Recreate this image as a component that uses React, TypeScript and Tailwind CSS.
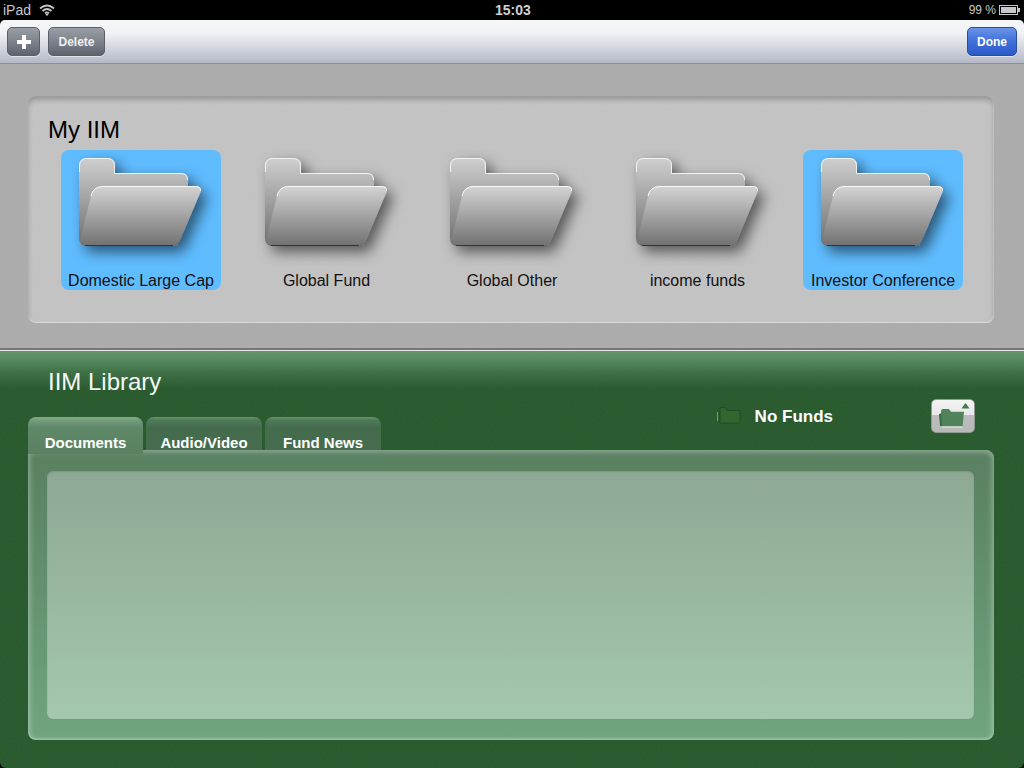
const tiles = [
  { name: "Domestic Large Cap", on: true },
  { name: "Global Fund", on: false },
  { name: "Global Other", on: false },
  { name: "income funds", on: false },
  { name: "Investor Conference", on: true },
];

function Grain({ id, opacity }: { id: string; opacity: string }) {
  return (
    <svg className={`absolute inset-0 w-full h-full pointer-events-none ${opacity}`} aria-hidden="true">
      <filter id={id}>
        <feTurbulence type="fractalNoise" baseFrequency="0.8" numOctaves="2" seed="4" />
        <feColorMatrix type="saturate" values="0" />
      </filter>
      <rect width="100%" height="100%" filter={`url(#${id})`} />
    </svg>
  );
}

function Folder({ id }: { id: string }) {
  return (
    <svg width="160" height="116" viewBox="0 0 160 116" className="block">
      <defs>
        <linearGradient id={`${id}b`} x1="0" y1="0" x2="0" y2="1">
          <stop offset="0" stopColor="#cfcfcf" />
          <stop offset="1" stopColor="#6e6e6e" />
        </linearGradient>
        <linearGradient id={`${id}f`} x1="0" y1="0" x2="0" y2="1">
          <stop offset="0" stopColor="#d4d4d4" />
          <stop offset="1" stopColor="#717171" />
        </linearGradient>
        <filter id={`${id}s`} x="-20%" y="-20%" width="150%" height="150%">
          <feDropShadow dx="6" dy="6" stdDeviation="7" floodColor="#000" floodOpacity="0.55" />
        </filter>
      </defs>
      <g filter={`url(#${id}s)`}>
        <path
          d="M18 16 Q18 8 26 8 H46 Q54 8 54 16 V23 H120 Q127 23 127 30 V60 L116 96 H26 Q18 96 18 88 Z"
          fill={`url(#${id}b)`}
        />
        <path
          d="M42 36 H134 Q141 36 139.500 42 L120 88 Q117 96 110 96 H26 Q18 96 19.500 88 L30 46 Q32 36 42 36 Z"
          fill={`url(#${id}f)`}
        />
      </g>
      <path d="M18.500 22 V16 Q18.500 8.500 26 8.500 H46 Q53.500 8.500 53.500 16 V23.500 H120 Q126.500 23.500 126.500 30" fill="none" stroke="#f4f4f4" strokeWidth="1" />
      <path d="M30 46 Q32 36.500 42 36.500 H134 Q140.500 36.500 139.500 41" fill="none" stroke="#fafafa" strokeWidth="1" />
      <path d="M24 95.500 H112" fill="none" stroke="#333" strokeWidth="1" />
    </svg>
  );
}

function Wifi() {
  return (
    <svg width="16" height="12" viewBox="0 0 16 12" fill="none" stroke="#c4c4c4" strokeWidth="1.800">
      <path d="M1 4.500 Q8 -1.500 15 4.500" />
      <path d="M3.500 7 Q8 3 12.500 7" />
      <path d="M6 9.300 Q8 7.700 10 9.300" />
      <path d="M7 10.500 L8 11.500 L9 10.500 Z" fill="#c4c4c4" strokeWidth="1" />
    </svg>
  );
}

export default function App() {
  return (
    <div className="w-[1024px] h-[768px] flex flex-col overflow-hidden bg-black font-['Liberation_Sans',Arial,sans-serif]">
      <div className="h-5 shrink-0 relative flex items-center justify-between pl-[3px] pr-[4px] text-[#c8c8c8] text-[14px]">
        <div className="flex items-center gap-[8px]">
          <span>iPad</span>
          <Wifi />
        </div>
        <span className="absolute left-[495px] top-0 font-bold text-[14px] text-[#d0d0d0]">15:03</span>
        <div className="flex items-center gap-[3px]">
          <span className="text-[12px]">99 %</span>
          <div className="flex items-center">
            <div className="w-[19px] h-[10px] border border-[#c8c8c8] p-[1px]">
              <div className="w-full h-full bg-[#c8c8c8]" />
            </div>
            <div className="w-[2px] h-[4px] bg-[#c8c8c8]" />
          </div>
        </div>
      </div>

      <div className="h-11 shrink-0 rounded-t-[5px] flex items-center justify-between pl-[7px] pr-[7px] border-b border-[#8b8e9c] bg-[linear-gradient(#f6f7f9_0%,#f1f2f5_30%,#cfd2dc_70%,#b4b8c7_100%)]">
        <div className="flex items-center gap-2">
          <button className="w-[33px] h-[29px] rounded-[5px] border border-[#5a5f69] flex items-center justify-center bg-[linear-gradient(#9a9ea6_0%,#7d828c_50%,#5e636e_100%)] shadow-[0_1px_0_#ffffff80]">
            <span className="relative block w-[14px] h-[14px]">
              <span className="absolute left-[5px] top-0 w-1 h-[14px] bg-white" />
              <span className="absolute left-0 top-[5px] w-[14px] h-1 bg-white" />
            </span>
          </button>
          <button className="w-[57px] h-[29px] rounded-[5px] border border-[#5a5f69] text-[12px] font-bold text-[#f0f0f0] bg-[linear-gradient(#9a9ea6_0%,#7d828c_50%,#5e636e_100%)] shadow-[0_1px_0_#ffffff80]">
            Delete
          </button>
        </div>
        <button className="w-[50px] h-[29px] rounded-[5px] border border-[#2a4f96] text-[12px] font-bold text-white bg-[linear-gradient(#6a94e8_0%,#3f6fdb_50%,#2c5bc9_100%)] shadow-[0_1px_0_#ffffff80]">
          Done
        </button>
      </div>

      <div className="relative h-[284px] shrink-0 pt-8 px-7 bg-[#acacac]">
        <Grain id="g1" opacity="opacity-[0.07]" />
        <div className="relative w-[966px] h-[227px] rounded-[8px] bg-[#c3c3c3] pl-[33px] pr-[31px] pt-[19px] shadow-[inset_0_4px_5px_#00000038,inset_0_-1px_1px_#ffffff70,inset_-1px_0_1px_#ffffff40]">
          <Grain id="g2" opacity="opacity-[0.05]" />
          <div className="relative -ml-[13px] text-[24px] leading-[30px] text-black">My IIM</div>
          <div className="relative mt-[5px] flex justify-between">
            {tiles.map((t, i) => (
              <div key={t.name} className={`w-[160px] h-[140px] rounded-[8px] flex flex-col items-center ${t.on ? "bg-[#5fbcff]" : ""}`}>
                <Folder id={`f${i}`} />
                <div className="text-[16px] leading-[18px] mt-[6px] text-[#111] whitespace-nowrap">{t.name}</div>
              </div>
            ))}
          </div>
        </div>
      </div>

      <div className="h-[3px] shrink-0 bg-[linear-gradient(#77777a_0%,#77777a_66%,#e8e8e8_66%)]" />

      <div className="relative flex-1 rounded-b-[6px] px-7 bg-[linear-gradient(#62946a_0px,#568a5e_8px,#3b6d43_22px,#27592c_38px)]">
        <Grain id="g3" opacity="opacity-[0.05]" />
        <div className="relative flex items-start justify-between h-[99px]">
          <div className="flex flex-col">
            <div className="pl-5 pt-4 text-[24px] leading-[30px] text-[#f4f7f4]">IIM Library</div>
            <div className="mt-5 flex gap-[3px] text-[15px] font-bold text-white">
              <div className="relative z-10 w-[115px] h-[37px] rounded-t-[8px] flex items-start justify-center pt-[17px] leading-[18px] bg-[linear-gradient(#84a98c_0%,#729a7a_4px,#5f8868_11px,#5a8262_100%)]">
                Documents
              </div>
              <div className="w-[116px] h-[33px] rounded-t-[8px] flex items-start justify-center pt-[18px] leading-[16px] overflow-hidden bg-[linear-gradient(#6a9272_0%,#4f7a58_3px,#436b4c_11px,#456d4e_100%)]">
                Audio/Video
              </div>
              <div className="w-[116px] h-[33px] rounded-t-[8px] flex items-start justify-center pt-[18px] leading-[16px] overflow-hidden bg-[linear-gradient(#6a9272_0%,#4f7a58_3px,#436b4c_11px,#456d4e_100%)]">
                Fund News
              </div>
            </div>
          </div>
          <div className="flex items-start pr-[21px] pt-12">
            <svg width="24" height="18" viewBox="0 0 24 18" className="mt-2 mr-[14px]">
              <path d="M0.500 5 V14" stroke="#6f9f76" strokeWidth="1" fill="none" />
              <path d="M3 1.500 Q3 0.500 4 0.500 H8.500 L10 3.500 H23 V16 H3 Z" fill="#33662f" stroke="#234a27" strokeWidth="1" />
            </svg>
            <span className="mt-2 mr-[98px] text-[17px] leading-5 font-bold text-white">No Funds</span>
            <div className="relative w-[44px] h-[34px] rounded-[5px] border border-[#8f9a91] overflow-hidden bg-[linear-gradient(#f4f4f4_0%,#e8e8e8_47%,#bcbcbc_47%,#b8b8b8_100%)]">
              <svg width="44" height="34" viewBox="0 0 44 34" className="absolute -left-px -top-px">
                <path d="M30.500 9.500 L34.500 4 L38.500 9.500 Z" fill="#3f7a4b" />
                <path d="M8 15 L11 14 V27 H9 Z" fill="#3a6b43" />
                <path d="M10 12 Q10 10 12 10 H18 L20 12.700 H33 L31.500 27.500 H11 Z" fill="#4f835a" />
                <path d="M11 28 H31.500" stroke="#f4f4f4" />
              </svg>
            </div>
          </div>
        </div>

        <div className="relative w-[966px] h-[290px] rounded-[8px] rounded-tl-none pt-[21px] pl-[19px] pr-[20px] bg-[linear-gradient(#598162_0%,#598162_5%,#70a57f_100%)] shadow-[inset_0_4px_4px_#ffffff28,inset_4px_0_4px_#ffffff28,inset_-4px_0_4px_#ffffff28,inset_0_-2px_2px_#ffffff30]">
          <div className="h-[248px] rounded-[6px] bg-[linear-gradient(#8ea893_0%,#a4c8ad_100%)] shadow-[inset_0_1px_2px_#00000020]" />
        </div>
      </div>
    </div>
  );
}
